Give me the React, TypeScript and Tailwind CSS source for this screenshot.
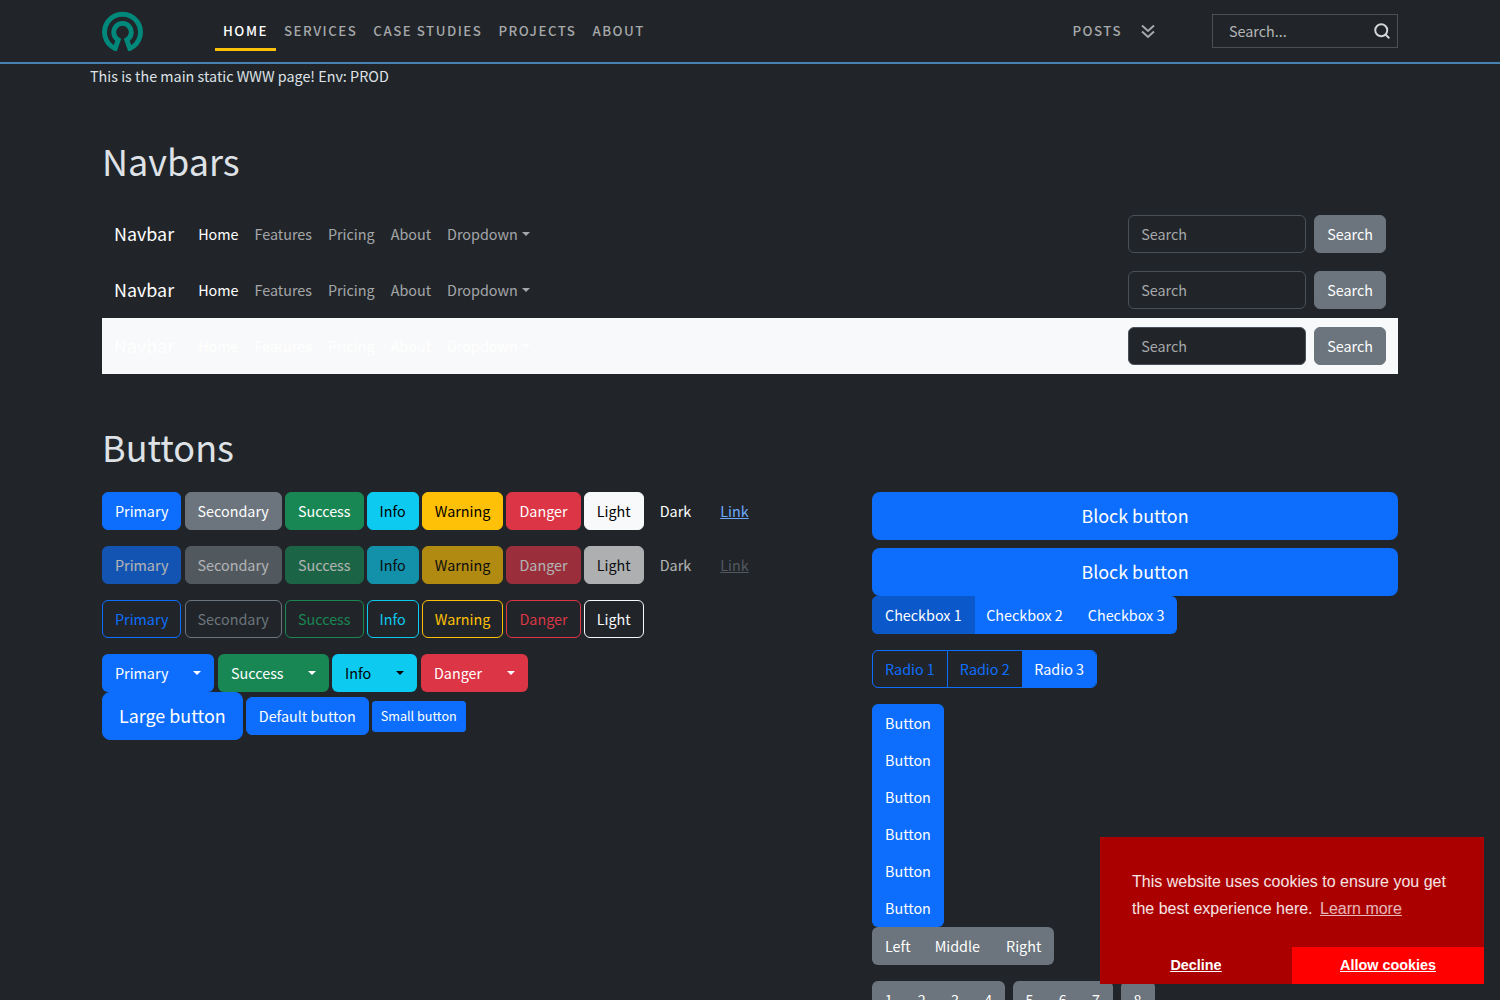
import { Search } from 'lucide-react';
import type { ReactNode } from 'react';

const BTN = 'inline-block rounded-md border px-3 py-[6px] text-[14.35px] leading-6 whitespace-nowrap';

const SOLID = [
  { label: 'Primary', className: 'border-[#0d6efd] bg-[#0d6efd] text-white' },
  { label: 'Secondary', className: 'border-[#6c757d] bg-[#6c757d] text-white' },
  { label: 'Success', className: 'border-[#198754] bg-[#198754] text-white' },
  { label: 'Info', className: 'border-[#0dcaf0] bg-[#0dcaf0] text-black' },
  { label: 'Warning', className: 'border-[#ffc107] bg-[#ffc107] text-black' },
  { label: 'Danger', className: 'border-[#dc3545] bg-[#dc3545] text-white' },
  { label: 'Light', className: 'border-[#f8f9fa] bg-[#f8f9fa] text-black' },
];

const OUTLINE = [
  { label: 'Primary', className: 'border-[#0d6efd] text-[#0d6efd]' },
  { label: 'Secondary', className: 'border-[#6c757d] text-[#6c757d]' },
  { label: 'Success', className: 'border-[#198754] text-[#198754]' },
  { label: 'Info', className: 'border-[#0dcaf0] text-[#0dcaf0]' },
  { label: 'Warning', className: 'border-[#ffc107] text-[#ffc107]' },
  { label: 'Danger', className: 'border-[#dc3545] text-[#dc3545]' },
  { label: 'Light', className: 'border-[#f8f9fa] text-[#f8f9fa]' },
];

const SPLIT = [
  { label: 'Primary', width: 'w-[112px]', className: 'bg-[#0d6efd] text-white', caret: 'border-t-white' },
  { label: 'Success', width: 'w-[111px]', className: 'bg-[#198754] text-white', caret: 'border-t-white' },
  { label: 'Info', width: 'w-[85px] -ml-px', className: 'bg-[#0dcaf0] text-black', caret: 'border-t-black' },
  { label: 'Danger', width: 'w-[107px]', className: 'bg-[#dc3545] text-white', caret: 'border-t-white' },
];

function Caret({ className }: { className: string }) {
  return <span className={`inline-block h-0 w-0 border-x-[4.5px] border-t-[4.5px] border-x-transparent ${className}`} />;
}

function Logo() {
  return (
    <svg width="43" height="41" viewBox="0 0 44 42" fill="none" className="-mt-[2px]">
      <path
        d="M14.5 39.5 A18.4 18.4 0 1 1 29.5 39.5 L26.4 30.6 A9 9 0 1 0 17.6 30.6 Z"
        fill="none"
        stroke="#00897b"
        strokeWidth="5"
        strokeLinejoin="miter"
      />
    </svg>
  );
}

function DoubleChevron() {
  return (
    <svg width="14" height="15" viewBox="0 0 14 15" fill="none" stroke="currentColor" strokeWidth="2" className="ml-[19px]">
      <path d="M1 1.5 L7 7 L13 1.5" />
      <path d="M1 7.5 L7 13 L13 7.5" />
    </svg>
  );
}

function TopBar() {
  return (
    <header className="flex h-[64px] items-center border-b-2 border-[#4682b4] pl-[101px] pr-[102px]">
      <Logo />
      <nav className="ml-[71px] flex h-full items-center text-[13.3px] font-medium tracking-[1.5px] text-[#a6a8aa]">
        <a className="relative flex h-full items-center px-2 text-white">
          HOME
          <span className="absolute right-0 bottom-[11px] left-0 h-[3px] bg-[#ffc107]" />
        </a>
        <a className="px-2">SERVICES</a>
        <a className="px-2">CASE STUDIES</a>
        <a className="px-2">PROJECTS</a>
        <a className="px-2">ABOUT</a>
      </nav>
      <div className="ml-auto flex items-center text-[13.3px] font-medium tracking-[1.5px] text-[#a6a8aa]">
        <span>POSTS</span>
        <DoubleChevron />
      </div>
      <div className="ml-[57px] flex h-[34px] w-[186px] items-center justify-between border border-[#4c4f53] pr-[6px] pl-4 text-[14.35px] text-[#b4b6b8]">
        <span>Search...</span>
        <Search size={18} strokeWidth={2.6} className="text-[#d4d5d6]" />
      </div>
    </header>
  );
}

function DemoNavbar({ light }: { light?: boolean }) {
  const text = light ? 'text-white/90' : 'text-white/60';
  return (
    <div className={`flex h-14 items-center pr-3 pl-3 ${light ? 'bg-[#f8f9fa]' : ''}`}>
      <span className="pb-[2px] text-[17.9px] leading-[30px] text-white">Navbar</span>
      <nav className="ml-4 flex items-center">
        <a className="p-2 text-white">Home</a>
        <a className={`p-2 ${text}`}>Features</a>
        <a className={`p-2 ${text}`}>Pricing</a>
        <a className={`p-2 ${text}`}>About</a>
        <a className={`flex items-center gap-[4px] p-2 ${text}`}>
          Dropdown
          <Caret className={light ? 'border-t-white/90' : 'border-t-white/60'} />
        </a>
      </nav>
      <div className="ml-auto flex items-center gap-2">
        <div className="h-[38px] w-[178px] rounded-md border border-[#495057] bg-[#212529] px-3 py-[6px] text-[#a6a8aa]">
          Search
        </div>
        <button className={`${BTN} border-[#6c757d] bg-[#6c757d] text-white`}>Search</button>
      </div>
    </div>
  );
}

function Row({ children, className = '' }: { children: ReactNode; className?: string }) {
  return <div className={`flex items-center gap-[3.1px] ${className}`}>{children}</div>;
}

function ButtonsLeft() {
  return (
    <div>
      <Row>
        {SOLID.map((b) => (
          <button key={b.label} className={`${BTN} ${b.className}`}>
            {b.label}
          </button>
        ))}
        <button className={`${BTN} border-transparent text-white`}>Dark</button>
        <a className={`${BTN} border-transparent text-[#6ea8fe] underline`}>Link</a>
      </Row>
      <Row className="mt-4">
        {SOLID.map((b) => (
          <button key={b.label} className={`${BTN} ${b.className} opacity-65`}>
            {b.label}
          </button>
        ))}
        <button className={`${BTN} border-transparent text-white opacity-65`}>Dark</button>
        <a className={`${BTN} border-transparent text-[#6c757d] underline opacity-65`}>Link</a>
      </Row>
      <Row className="mt-4">
        {OUTLINE.map((b) => (
          <button key={b.label} className={`${BTN} ${b.className}`}>
            {b.label}
          </button>
        ))}
      </Row>
      <div className="mt-4 flex items-center gap-1">
        {SPLIT.map((b) => (
          <button
            key={b.label}
            className={`flex h-[38px] items-center justify-between rounded-md pr-[13px] pl-[13px] ${b.width} ${b.className}`}
          >
            {b.label}
            <Caret className={b.caret} />
          </button>
        ))}
      </div>
      <div className="flex items-center gap-[3px]">
        <button className="rounded-lg border border-[#0d6efd] bg-[#0d6efd] px-4 pt-[7px] pb-[9px] text-[17.9px] leading-[30px] text-white">
          Large button
        </button>
        <button className={`${BTN} border-[#0d6efd] bg-[#0d6efd] text-white`}>Default button</button>
        <button className="rounded-[3px] border border-[#0d6efd] bg-[#0d6efd] px-2 pt-[3px] pb-[5px] text-[12.6px] leading-[21px] text-white">
          Small button
        </button>
      </div>
    </div>
  );
}

function ButtonsRight() {
  return (
    <div>
      <button className="block h-12 w-full rounded-lg bg-[#0d6efd] pb-[2px] text-[17.9px] text-white">Block button</button>
      <button className="mt-2 block h-12 w-full rounded-lg bg-[#0d6efd] pb-[2px] text-[17.9px] text-white">Block button</button>

      <div className="flex w-fit overflow-hidden rounded-md bg-[#0d6efd] text-white">
        <span className="bg-[#0a58ca] py-[7px] pr-[13px] pl-[13px]">Checkbox 1</span>
        <span className="py-[7px] pr-[12.5px] pl-[11.5px]">Checkbox 2</span>
        <span className="py-[7px] pr-[13px] pl-[12.5px]">Checkbox 3</span>
      </div>

      <div className="mt-4 flex w-fit overflow-hidden rounded-md border border-[#0d6efd] text-[#0d6efd]">
        <span className="border-r border-[#0d6efd] px-3 py-[6px]">Radio 1</span>
        <span className="px-3 py-[6px]">Radio 2</span>
        <span className="bg-[#0d6efd] py-[6px] pr-[12px] pl-[12.5px] text-white">Radio 3</span>
      </div>

      <div className="mt-4 flex w-fit flex-col rounded-md bg-[#0d6efd] text-white">
        {[1, 2, 3, 4, 5, 6].map((n) => (
          <span key={n} className="h-[37px] px-[13px] py-[7px] last:h-[38px]">
            Button
          </span>
        ))}
      </div>

      <div className="flex w-fit rounded-md bg-[#6c757d] text-white">
        <span className="py-[7px] pr-[12px] pl-[13px]">Left</span>
        <span className="py-[7px] pr-[13px] pl-[12px]">Middle</span>
        <span className="px-[13px] py-[7px]">Right</span>
      </div>

      <div className="mt-4 flex gap-2 text-white">
        <div className="flex rounded-md bg-[#6c757d]">
          {[1, 2, 3, 4].map((n) => (
            <span key={n} className="px-[12.63px] py-[7px]">
              {n}
            </span>
          ))}
        </div>
        <div className="flex rounded-md bg-[#6c757d]">
          {[5, 6, 7].map((n) => (
            <span key={n} className="px-[12.63px] py-[7px]">
              {n}
            </span>
          ))}
        </div>
        <div className="flex rounded-md bg-[#6c757d]">
          <span className="px-[13px] py-[7px]">8</span>
        </div>
      </div>
    </div>
  );
}

function CookieBanner() {
  return (
    <div className="fixed right-4 bottom-4 w-[384px] bg-[#aa0000] font-['Liberation_Sans',sans-serif] text-base leading-[27px] text-white/90">
      <p className="px-8 pt-[31px] pb-[25px]">
        This website uses cookies to ensure you get the best experience here.{' '}
        <a className="ml-[3px] underline opacity-80">Learn more</a>
      </p>
      <div className="flex h-[37px] text-center text-[14.4px] leading-[37px] font-bold text-white underline">
        <a className="w-1/2">Decline</a>
        <a className="w-1/2 bg-[#ff0000]">Allow cookies</a>
      </div>
    </div>
  );
}

export default function App() {
  return (
    <div className="h-screen overflow-hidden bg-[#212529] font-['Noto_Sans_CJK_JP','Noto_Sans',sans-serif] text-[14.35px] leading-6 text-[#dee2e6]">
      <TopBar />
      <p className="pb-[2px] pl-[90px] leading-6">This is the main static WWW page! Env: PROD</p>
      <main className="mx-[102px]">
        <h1 className="mt-[40px] text-[36px] leading-[60px] font-normal">Navbars</h1>
        <div className="mt-[16px]">
          <DemoNavbar />
          <DemoNavbar />
          <DemoNavbar light />
        </div>
        <h1 className="mt-[42px] text-[36px] leading-[60px] font-normal">Buttons</h1>
        <div className="mt-[16px] grid grid-cols-[746px_526px] gap-6">
          <ButtonsLeft />
          <ButtonsRight />
        </div>
      </main>
      <CookieBanner />
    </div>
  );
}
